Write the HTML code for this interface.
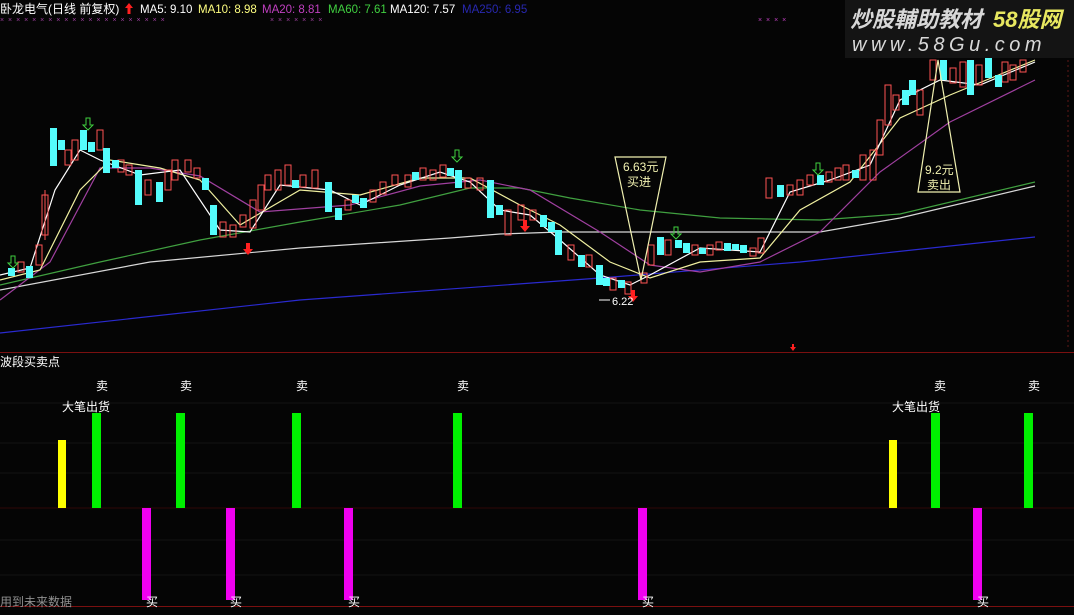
<!DOCTYPE html>
<html><head><meta charset="utf-8"><style>
html,body{margin:0;padding:0;background:#000;width:1074px;height:615px;overflow:hidden;font-family:"Liberation Sans","Noto Sans CJK SC",sans-serif}
svg text{font-family:"Liberation Sans","Noto Sans CJK SC",sans-serif}
</style></head><body>
<svg width="1074" height="615" viewBox="0 0 1074 615" xmlns="http://www.w3.org/2000/svg">
<rect width="1074" height="615" fill="#050505"/>
<text x="0" y="13" font-size="12" fill="#fff">卧龙电气(日线 前复权)</text>
<path d="M129 3 l-4 5 h2.5 v6 h3 v-6 h2.5z" fill="#ff2020"/>
<text x="140" y="13" font-size="11.5" fill="#fff">MA5: 9.10</text>
<text x="198" y="13" font-size="11.5" fill="#ffff80">MA10: 8.98</text>
<text x="262" y="13" font-size="11.5" fill="#c040c0">MA20: 8.81</text>
<text x="328" y="13" font-size="11.5" fill="#40d040">MA60: 7.61</text>
<text x="390" y="13" font-size="11.5" fill="#fff">MA120: 7.57</text>
<text x="462" y="13" font-size="11.5" fill="#2828b0">MA250: 6.95</text>
<text x="0" y="22" font-size="7" fill="#a040a0" letter-spacing="1">× × × × × × × × × × × × × ×   × × × × ×   × ×</text>
<text x="270" y="22" font-size="7" fill="#a040a0" letter-spacing="1">× × × ×   ×     × ×</text>
<text x="758" y="22" font-size="7" fill="#c040c0" letter-spacing="1">× × ×   ×</text>
<rect x="845" y="0" width="229" height="58" fill="#141414"/>
<text x="850" y="27" font-size="22" fill="#d8d8d8" font-style="italic" font-weight="bold">炒股輔助教材</text>
<text x="993" y="27" font-size="22" fill="#e8e860" font-style="italic" font-weight="bold">58股网</text>
<text x="852" y="51" font-size="20" fill="#d8d8d8" font-style="italic" letter-spacing="4.5">www.58Gu.com</text>
<g fill="none" stroke-width="1.2">
<polyline stroke="#2a2ad0" points="0,333 300,300 600,278 800,262 1035,237"/>
<polyline stroke="#d8d8d8" points="0,290 150,262 300,248 450,238 500,234 560,232 820,232 900,218 1035,186"/>
<polyline stroke="#40a040" points="0,285 100,262 200,240 300,222 400,205 470,188 520,188 570,198 640,210 720,218 820,220 900,214 1035,182"/>
<polyline stroke="#a040a0" points="0,300 50,262 100,168 150,168 200,176 260,212 350,205 420,186 480,180 530,190 600,232 650,265 700,272 760,262 820,232 880,172 950,122 1035,80"/>
<polyline stroke="#f0f0a0" points="0,280 40,270 80,190 110,160 160,168 200,180 240,225 300,190 360,195 420,178 470,178 520,205 560,225 610,262 650,278 700,262 760,258 800,210 850,182 900,118 950,95 1035,60"/>
<polyline stroke="#fff" points="0,275 30,268 55,190 80,150 100,160 140,175 180,170 220,230 250,232 280,185 330,190 360,205 400,185 440,172 470,182 500,210 530,215 560,240 600,275 630,285 650,275 700,248 760,252 790,192 830,180 870,165 900,100 940,80 980,85 1035,62"/>
</g>
<g fill="none" stroke="#ff5454">
<line x1="45" y1="190" x2="45" y2="240"/><rect x="42" y="195" width="6" height="40"/>
<rect x="18" y="262" width="6" height="10"/><rect x="36" y="245" width="6" height="20"/>
<rect x="65" y="150" width="6" height="15"/><rect x="72" y="140" width="6" height="20"/><rect x="97" y="130" width="6" height="20"/><rect x="118" y="160" width="6" height="12"/><rect x="126" y="165" width="6" height="10"/>
<rect x="145" y="180" width="6" height="15"/><rect x="165" y="170" width="6" height="20"/><rect x="172" y="160" width="6" height="20"/><rect x="185" y="160" width="6" height="12"/><rect x="194" y="168" width="6" height="10"/>
<rect x="220" y="222" width="6" height="15"/><rect x="230" y="225" width="6" height="12"/><rect x="240" y="215" width="6" height="12"/>
<rect x="250" y="200" width="6" height="28"/><rect x="258" y="185" width="6" height="25"/><rect x="265" y="175" width="6" height="15"/>
<rect x="275" y="170" width="6" height="20"/><rect x="285" y="165" width="6" height="20"/><rect x="300" y="175" width="6" height="12"/><rect x="312" y="170" width="6" height="18"/>
<rect x="345" y="200" width="6" height="10"/><rect x="370" y="190" width="6" height="12"/>
<rect x="380" y="182" width="6" height="12"/><rect x="392" y="175" width="6" height="10"/><rect x="405" y="175" width="6" height="12"/><rect x="420" y="168" width="6" height="12"/><rect x="430" y="170" width="6" height="10"/>
<rect x="440" y="165" width="6" height="12"/><rect x="465" y="178" width="6" height="10"/><rect x="477" y="178" width="6" height="12"/><rect x="505" y="210" width="6" height="25"/><rect x="518" y="205" width="6" height="15"/><rect x="530" y="210" width="6" height="10"/>
<rect x="568" y="245" width="6" height="15"/><rect x="586" y="255" width="6" height="12"/><rect x="610" y="278" width="6" height="12"/><rect x="625" y="282" width="6" height="12"/>
<rect x="641" y="273" width="6" height="10"/><rect x="648" y="245" width="6" height="20"/><rect x="665" y="240" width="6" height="15"/><rect x="692" y="245" width="6" height="10"/>
<rect x="707" y="245" width="6" height="10"/><rect x="716" y="242" width="6" height="8"/><rect x="750" y="248" width="6" height="8"/><rect x="758" y="238" width="6" height="15"/><rect x="766" y="178" width="6" height="20"/>
<rect x="787" y="185" width="6" height="10"/><rect x="797" y="180" width="6" height="15"/><rect x="807" y="175" width="6" height="10"/><rect x="826" y="172" width="6" height="10"/><rect x="835" y="168" width="6" height="12"/><rect x="843" y="165" width="6" height="15"/><rect x="860" y="155" width="6" height="25"/>
<rect x="870" y="150" width="6" height="30"/><rect x="877" y="120" width="6" height="35"/><rect x="885" y="85" width="6" height="40"/><rect x="893" y="95" width="6" height="15"/>
<rect x="917" y="90" width="6" height="25"/><rect x="930" y="60" width="6" height="20"/><rect x="950" y="68" width="6" height="15"/><rect x="960" y="62" width="6" height="25"/><rect x="976" y="65" width="6" height="20"/>
<rect x="1002" y="62" width="6" height="20"/><rect x="1010" y="65" width="6" height="15"/><rect x="1020" y="60" width="6" height="12"/>
</g>
<g fill="#54fcfc">
<rect x="26" y="266" width="7" height="12"/><rect x="8" y="268" width="7" height="8"/><rect x="50" y="128" width="7" height="38"/><rect x="58" y="140" width="7" height="10"/><rect x="80" y="130" width="7" height="20"/><rect x="88" y="142" width="7" height="10"/>
<rect x="103" y="148" width="7" height="25"/><rect x="112" y="160" width="7" height="8"/><rect x="135" y="170" width="7" height="35"/><rect x="156" y="182" width="7" height="20"/><rect x="202" y="178" width="7" height="12"/>
<rect x="210" y="205" width="7" height="30"/><rect x="292" y="180" width="7" height="8"/><rect x="325" y="182" width="7" height="30"/><rect x="335" y="208" width="7" height="12"/>
<rect x="360" y="198" width="7" height="10"/><rect x="352" y="195" width="7" height="8"/><rect x="412" y="172" width="7" height="8"/><rect x="447" y="168" width="7" height="8"/><rect x="455" y="170" width="7" height="18"/><rect x="487" y="180" width="7" height="38"/><rect x="496" y="205" width="7" height="10"/>
<rect x="540" y="215" width="7" height="12"/><rect x="548" y="222" width="7" height="10"/><rect x="555" y="230" width="7" height="25"/><rect x="578" y="255" width="7" height="12"/>
<rect x="596" y="265" width="7" height="20"/><rect x="603" y="278" width="7" height="8"/><rect x="618" y="280" width="7" height="8"/><rect x="657" y="237" width="7" height="18"/><rect x="675" y="240" width="7" height="8"/><rect x="683" y="243" width="7" height="10"/>
<rect x="699" y="248" width="7" height="6"/><rect x="724" y="243" width="7" height="8"/><rect x="732" y="244" width="7" height="6"/><rect x="740" y="245" width="7" height="8"/><rect x="777" y="185" width="7" height="12"/>
<rect x="817" y="175" width="7" height="10"/><rect x="852" y="170" width="7" height="8"/><rect x="902" y="90" width="7" height="15"/><rect x="909" y="80" width="7" height="15"/>
<rect x="940" y="60" width="7" height="20"/><rect x="967" y="60" width="7" height="35"/><rect x="985" y="58" width="7" height="20"/>
<rect x="995" y="75" width="7" height="12"/>
</g>
<g fill="none" stroke="#40d040" stroke-width="1">
<path d="M11 256 v7 h-3 l5 5 l5 -5 h-3 v-7z"/><path d="M86 118 v7 h-3 l5 5 l5 -5 h-3 v-7z"/><path d="M455 150 v7 h-3 l5 5 l5 -5 h-3 v-7z"/>
<path d="M674 227 v7 h-3 l5 5 l5 -5 h-3 v-7z"/><path d="M816 163 v7 h-3 l5 5 l5 -5 h-3 v-7z"/>
</g>
<g fill="#ff2020"><path d="M248 255 l-5 -6 h3 v-6 h4 v6 h3z"/><path d="M525 232 l-5 -6 h3 v-6 h4 v6 h3z"/><path d="M633 302 l-5 -6 h3 v-6 h4 v6 h3z"/><path d="M793 351 l-3 -4 h2 v-3 h2 v3 h2z"/></g>
<text x="612" y="305" font-size="11" fill="#fff">6.22</text>
<line x1="599" y1="300" x2="610" y2="300" stroke="#fff"/>
<path d="M615 157 L666 157 L641 280 Z" fill="none" stroke="#f0f0b0" stroke-width="1.2"/>
<text x="623" y="171" font-size="12" fill="#f0f0b0">6.63元</text>
<text x="627" y="186" font-size="12" fill="#f0f0b0">买进</text>
<path d="M918 192 L960 192 L938 60 Z" fill="none" stroke="#f0f0b0" stroke-width="1.2"/>
<text x="925" y="174" font-size="12" fill="#f0f0b0">9.2元</text>
<text x="927" y="189" font-size="12" fill="#f0f0b0">卖出</text>
<line x1="1068" y1="60" x2="1068" y2="350" stroke="#601818" stroke-dasharray="2,3"/>
<line x1="0" y1="352.5" x2="1074" y2="352.5" stroke="#7a1010"/>
<text x="0" y="366" font-size="12" fill="#fff">波段买卖点</text>
<g stroke="#121212"><line x1="0" y1="403" x2="1074" y2="403"/><line x1="0" y1="443" x2="1074" y2="443"/><line x1="0" y1="473" x2="1074" y2="473"/><line x1="0" y1="540" x2="1074" y2="540"/><line x1="0" y1="575" x2="1074" y2="575"/></g>
<line x1="0" y1="508" x2="1074" y2="508" stroke="#300808"/>
<line x1="0" y1="606.5" x2="1074" y2="606.5" stroke="#7a1010"/>
<g fill="#00f000"><rect x="92" y="413" width="9" height="95"/><rect x="176" y="413" width="9" height="95"/><rect x="292" y="413" width="9" height="95"/><rect x="453" y="413" width="9" height="95"/><rect x="931" y="413" width="9" height="95"/><rect x="1024" y="413" width="9" height="95"/></g>
<g fill="#ffff00"><rect x="58" y="440" width="8" height="68"/><rect x="889" y="440" width="8" height="68"/></g>
<g fill="#f000f0"><rect x="142" y="508" width="9" height="92"/><rect x="226" y="508" width="9" height="92"/><rect x="344" y="508" width="9" height="92"/><rect x="638" y="508" width="9" height="92"/><rect x="973" y="508" width="9" height="92"/></g>
<g font-size="12" fill="#fff">
<text x="96" y="390">卖</text><text x="180" y="390">卖</text><text x="296" y="390">卖</text><text x="457" y="390">卖</text><text x="934" y="390">卖</text><text x="1028" y="390">卖</text>
<text x="62" y="411">大笔出货</text><text x="892" y="411">大笔出货</text>
<text x="146" y="606">买</text><text x="230" y="606">买</text><text x="348" y="606">买</text><text x="642" y="606">买</text><text x="977" y="606">买</text>
</g>
<text x="0" y="606" font-size="12" fill="#909090">用到未来数据</text>
</svg>
</body></html>
